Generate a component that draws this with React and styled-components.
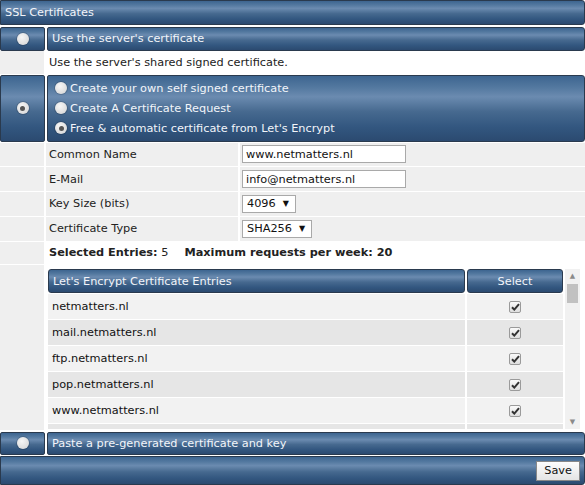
import React from 'react';
import styled, { createGlobalStyle, css } from 'styled-components';

const GlobalStyle = createGlobalStyle`
  html, body {
    margin: 0;
    padding: 0;
    background: #ffffff;
  }
  body {
    font-family: "DejaVu Sans", Verdana, sans-serif;
    font-size: 11.3px;
    color: #222;
  }
`;

const blueBar = css`
  background: linear-gradient(
    to bottom,
    #3d6590 0%,
    #5479a0 18%,
    #6b8bb0 32%,
    #46698f 55%,
    #335780 78%,
    #2b4a70 100%
  );
  border: 1px solid #2a3a4e;
  color: #f2f5fa;
`;

const Panel = styled.div`
  width: 585px;
  height: 485px;
  display: flex;
  flex-direction: column;
  overflow: hidden;
`;

const HeaderBar = styled.div`
  ${blueBar};
  height: 23px;
  display: flex;
  align-items: center;
  padding-left: 4px;
  border-radius: 0 3px 3px 0;
  margin-bottom: 2px;
`;

const OptionRow = styled.div`
  display: flex;
  gap: 2px;
  height: ${(p) => p.$height}px;
  margin-bottom: ${(p) => p.$mb || 0}px;
`;

const RadioCell = styled.div`
  ${blueBar};
  width: 43px;
  flex: none;
  border-radius: 2px;
  display: flex;
  align-items: center;
  justify-content: center;
`;

const TitleCell = styled.div`
  ${blueBar};
  flex: 1;
  border-radius: 2px 3px 3px 2px;
  display: flex;
  flex-direction: column;
  justify-content: center;
  padding-left: 4px;
  gap: ${(p) => p.$gap || 0}px;
`;

const Radio = styled.span`
  display: inline-block;
  width: 12px;
  height: 12px;
  border-radius: 50%;
  background: radial-gradient(circle at 40% 35%, #f6f6f6 0%, #dddddd 70%, #c4c4c4 100%);
  box-shadow: 0 0 0 1px rgba(0, 0, 0, 0.15);
  position: relative;
  flex: none;
  ${(p) =>
    p.$checked &&
    css`
      &::after {
        content: '';
        position: absolute;
        left: 3.5px;
        top: 3.5px;
        width: 5px;
        height: 5px;
        border-radius: 50%;
        background: #555;
      }
    `}
`;

const ChoiceLine = styled.label`
  display: flex;
  align-items: center;
  gap: 3px;
  margin-left: 3px;
`;

const FlatRow = styled.div`
  display: flex;
  gap: 1px;
  height: ${(p) => p.$height || 24}px;
  margin-bottom: 1px;
`;

const SideCell = styled.div`
  width: 44px;
  flex: none;
  background: #efefef;
`;

const TextCell = styled.div`
  flex: 1;
  background: #ffffff;
  display: flex;
  align-items: center;
  padding-left: 3px;
  margin-left: 1px;
`;

const FormRow = styled.div`
  display: flex;
  height: 24px;
  margin-bottom: 1px;
`;

const LabelCell = styled.div`
  width: 189px;
  flex: none;
  background: #efefef;
  margin-left: 2px;
  padding-left: 3px;
  display: flex;
  align-items: center;
`;

const ValueCell = styled.div`
  flex: 1;
  background: #efefef;
  margin-left: 2px;
  display: flex;
  align-items: center;
  padding-left: 2px;
`;

const TextInput = styled.div`
  width: 156px;
  height: 16px;
  border: 1px solid #a9a9a9;
  background: #fff;
  padding: 0 3px;
  display: flex;
  align-items: center;
  color: #111;
`;

const SelectBox = styled.div`
  height: 16px;
  border: 1px solid #a9a9a9;
  background: #fff;
  padding: 0 6px 0 4px;
  display: flex;
  align-items: center;
  gap: 7px;
  color: #111;

  span.arrow {
    font-size: 8px;
  }
`;

const SummaryCell = styled.div`
  flex: 1;
  margin-left: 2px;
  padding-left: 2px;
  display: flex;
  align-items: center;
  gap: 16px;

  b {
    font-weight: bold;
  }
`;

const TableRow = styled.div`
  display: flex;
  gap: 1px;
  height: 166px;
  margin-bottom: 2px;
`;

const TableArea = styled.div`
  flex: 1;
  margin-left: 1px;
  padding: 4px 5px 0 2px;
  display: flex;
  gap: 2px;
`;

const TableScroll = styled.div`
  flex: 1;
  height: 160px;
  overflow: hidden;
  display: flex;
  flex-direction: column;
`;

const TableHead = styled.div`
  display: flex;
  gap: 2px;
  height: 24px;
  flex: none;
`;

const HeadCell = styled.div`
  ${blueBar};
  border-radius: 3px;
  display: flex;
  align-items: center;
  ${(p) =>
    p.$center
      ? css`
          width: 94px;
          justify-content: center;
        `
      : css`
          flex: 1;
          padding-left: 4px;
        `}
`;

const EntryRow = styled.div`
  display: flex;
  height: 25px;
  flex: none;
  border-top: 1px solid #fff;
  background: ${(p) => (p.$alt ? '#e6e6e6' : '#f2f2f2')};
`;

const EntryName = styled.div`
  flex: 1;
  padding-left: 4px;
  display: flex;
  align-items: center;
  color: #111;
`;

const EntrySelect = styled.div`
  width: 96px;
  border-left: 2px solid #fff;
  display: flex;
  align-items: center;
  justify-content: center;
`;

const CheckBox = styled.span`
  width: 10px;
  height: 10px;
  border: 1px solid #9a9a9a;
  border-radius: 2px;
  background: linear-gradient(#fafafa, #dedede);
  display: flex;
  align-items: center;
  justify-content: center;
`;

const ScrollBar = styled.div`
  width: 15px;
  height: 160px;
  background: #f1f1f1;
  display: flex;
  flex-direction: column;
  align-items: center;
  font-size: 7px;
  color: #8a8a8a;

  .up,
  .down {
    height: 14px;
    display: flex;
    align-items: center;
  }

  .thumb {
    width: 11px;
    height: 19px;
    background: #c1c1c1;
    margin-top: 1px;
  }

  .fill {
    flex: 1;
  }
`;

const Footer = styled.div`
  ${blueBar};
  height: 27px;
  border-radius: 0 3px 3px 0;
  display: flex;
  align-items: center;
  justify-content: flex-end;
  padding-right: 4px;
`;

const SaveButton = styled.button`
  font-family: "DejaVu Sans", Verdana, sans-serif;
  font-size: 11.3px;
  height: 20px;
  padding: 0 7px;
  border: 1px solid #888;
  background: linear-gradient(#fdfdfd, #e4e4e4);
  color: #111;
  border-radius: 0;
`;

const Check = () => (
  <svg width="9" height="8" viewBox="0 0 9 8">
    <path d="M1 4.2 L3.3 6.6 L8 1.2" fill="none" stroke="#333" strokeWidth="2" />
  </svg>
);

// the last row is only peeking into view under the scroll area
const entries = [
  'netmatters.nl',
  'mail.netmatters.nl',
  'ftp.netmatters.nl',
  'pop.netmatters.nl',
  'www.netmatters.nl',
  '',
];

const App = () => (
  <>
    <GlobalStyle />
    <Panel>
      <HeaderBar>SSL Certificates</HeaderBar>

      <OptionRow $height={24}>
        <RadioCell>
          <Radio />
        </RadioCell>
        <TitleCell>Use the server's certificate</TitleCell>
      </OptionRow>

      <FlatRow $height={24}>
        <SideCell />
        <TextCell>Use the server's shared signed certificate.</TextCell>
      </FlatRow>

      <OptionRow $height={67} $mb={1}>
        <RadioCell>
          <Radio $checked />
        </RadioCell>
        <TitleCell $gap={7}>
          <ChoiceLine>
            <Radio />
            Create your own self signed certificate
          </ChoiceLine>
          <ChoiceLine>
            <Radio />
            Create A Certificate Request
          </ChoiceLine>
          <ChoiceLine>
            <Radio $checked />
            Free &amp; automatic certificate from Let's Encrypt
          </ChoiceLine>
        </TitleCell>
      </OptionRow>

      <FormRow>
        <SideCell />
        <LabelCell>Common Name</LabelCell>
        <ValueCell>
          <TextInput>www.netmatters.nl</TextInput>
        </ValueCell>
      </FormRow>
      <FormRow>
        <SideCell />
        <LabelCell>E-Mail</LabelCell>
        <ValueCell>
          <TextInput>info@netmatters.nl</TextInput>
        </ValueCell>
      </FormRow>
      <FormRow>
        <SideCell />
        <LabelCell>Key Size (bits)</LabelCell>
        <ValueCell>
          <SelectBox>
            4096 <span className="arrow">▼</span>
          </SelectBox>
        </ValueCell>
      </FormRow>
      <FormRow>
        <SideCell />
        <LabelCell>Certificate Type</LabelCell>
        <ValueCell>
          <SelectBox>
            SHA256 <span className="arrow">▼</span>
          </SelectBox>
        </ValueCell>
      </FormRow>

      <FlatRow $height={23}>
        <SideCell />
        <SummaryCell>
          <span>
            <b>Selected Entries:</b> 5
          </span>
          <span>
            <b>Maximum requests per week: 20</b>
          </span>
        </SummaryCell>
      </FlatRow>

      <TableRow>
        <SideCell />
        <TableArea>
          <TableScroll>
            <TableHead>
              <HeadCell>Let's Encrypt Certificate Entries</HeadCell>
              <HeadCell $center>Select</HeadCell>
            </TableHead>
            {entries.map((name, i) => (
              <EntryRow key={i} $alt={i % 2 === 1}>
                <EntryName>{name}</EntryName>
                <EntrySelect>
                  {name && (
                    <CheckBox>
                      <Check />
                    </CheckBox>
                  )}
                </EntrySelect>
              </EntryRow>
            ))}
          </TableScroll>
          <ScrollBar>
            <span className="up">▲</span>
            <span className="thumb" />
            <span className="fill" />
            <span className="down">▼</span>
          </ScrollBar>
        </TableArea>
      </TableRow>

      <OptionRow $height={24} $mb={1}>
        <RadioCell>
          <Radio />
        </RadioCell>
        <TitleCell>Paste a pre-generated certificate and key</TitleCell>
      </OptionRow>

      <Footer>
        <SaveButton>Save</SaveButton>
      </Footer>
    </Panel>
  </>
);

export default App;
